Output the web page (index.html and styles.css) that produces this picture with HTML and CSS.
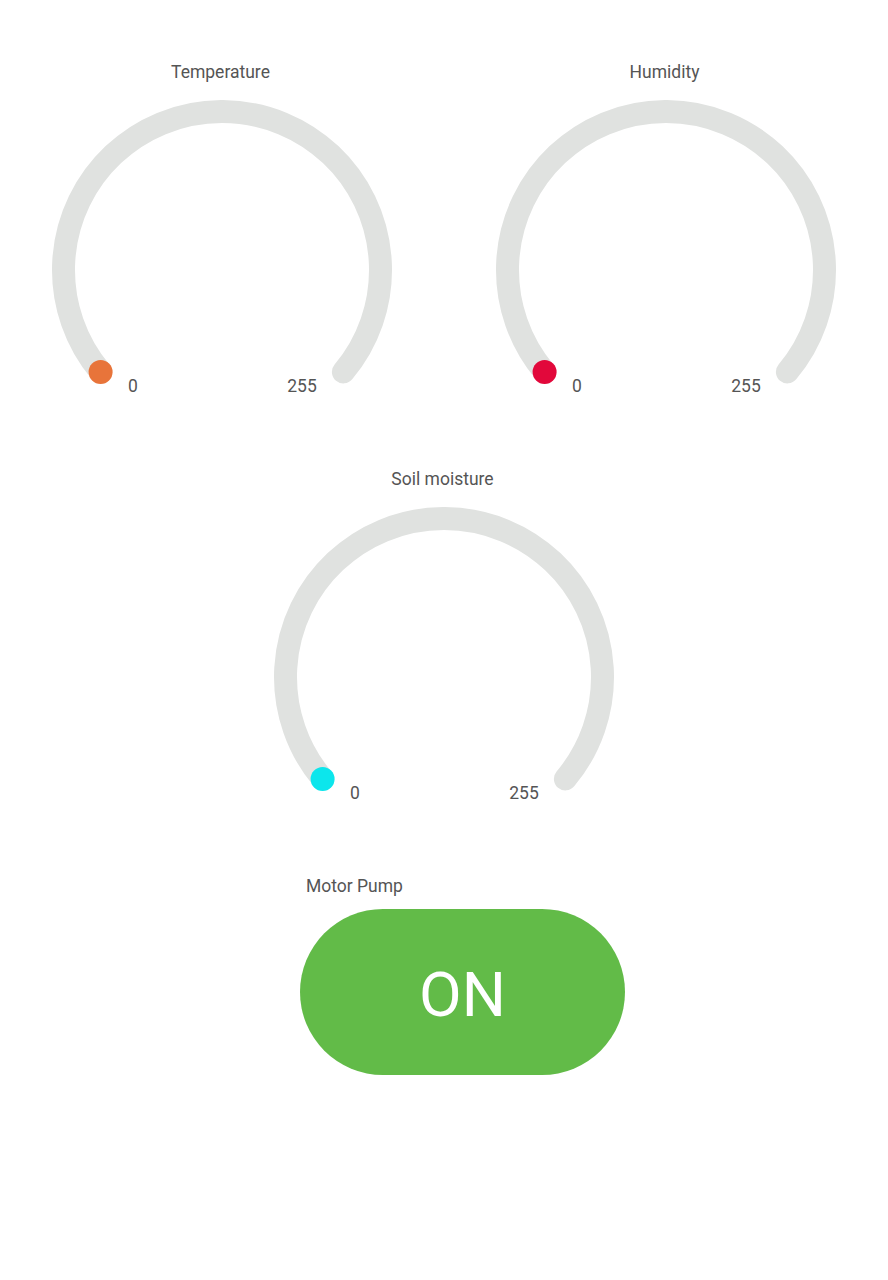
FILE: index.html
```html
<!DOCTYPE html>
<html>
<head>
<meta charset="utf-8">
<link rel="stylesheet" href="styles.css">
</head>
<body>
<main class="dash">
  <section class="grid">
    <div class="gauge">
      <div class="title">Temperature</div>
      <svg class="dial" width="360" height="310" viewBox="0 0 360 310">
        <path class="track" d="M 58.6 271.9 A 158.5 158.5 0 1 1 301.4 271.9"/>
        <circle cx="58.6" cy="271.9" r="12" fill="#E8743A"/>
        <text class="lbl" x="91" y="292">0</text>
        <text class="lbl" x="260" y="292">255</text>
      </svg>
    </div>
    <div class="gauge">
      <div class="title">Humidity</div>
      <svg class="dial" width="360" height="310" viewBox="0 0 360 310">
        <path class="track" d="M 58.6 271.9 A 158.5 158.5 0 1 1 301.4 271.9"/>
        <circle cx="58.6" cy="271.9" r="12" fill="#E2083B"/>
        <text class="lbl" x="91" y="292">0</text>
        <text class="lbl" x="260" y="292">255</text>
      </svg>
    </div>
    <div class="gauge wide">
      <div class="title">Soil moisture</div>
      <svg class="dial" width="360" height="310" viewBox="0 0 360 310">
        <path class="track" d="M 58.6 271.9 A 158.5 158.5 0 1 1 301.4 271.9"/>
        <circle cx="58.6" cy="271.9" r="12" fill="#0CE6EC"/>
        <text class="lbl" x="91" y="292">0</text>
        <text class="lbl" x="260" y="292">255</text>
      </svg>
    </div>
  </section>
  <section class="pump">
    <div class="pump-label">Motor Pump</div>
    <button class="pump-btn" type="button">ON</button>
  </section>
</main>
</body>
</html>
```
FILE: styles.css
```css
html, body {
  margin: 0;
  padding: 0;
  background: #ffffff;
}
body {
  font-family: Roboto, "Liberation Sans", Arial, sans-serif;
  color: #555555;
  width: 888px;
  height: 1280px;
  overflow: hidden;
}
.dash {
  padding-top: 60px;
}
.grid {
  display: grid;
  grid-template-columns: 444px 444px;
  row-gap: 57px;
}
.gauge {
  display: flex;
  flex-direction: column;
  align-items: center;
  gap: 16px;
}
.gauge.wide {
  grid-column: 1 / span 2;
}
.title {
  font-size: 17.5px;
  line-height: 24px;
  color: #555555;
  margin-right: 3px;
}
.dial {
  display: block;
}
.track {
  fill: none;
  stroke: #E0E2E0;
  stroke-width: 23;
  stroke-linecap: round;
}
.lbl {
  font-family: Roboto, "Liberation Sans", Arial, sans-serif;
  font-size: 17.5px;
  fill: #555555;
  text-anchor: middle;
}
.pump {
  margin-top: 57px;
  margin-left: 300px;
  width: 325px;
  display: flex;
  flex-direction: column;
  gap: 11px;
}
.pump-label {
  font-size: 17.5px;
  line-height: 24px;
  padding-left: 6px;
  color: #555555;
}
.pump-btn {
  width: 325px;
  height: 166px;
  border: none;
  border-radius: 83px;
  background: #62BB48;
  color: #ffffff;
  font-family: Roboto, "Liberation Sans", Arial, sans-serif;
  font-size: 62px;
  font-weight: 400;
  padding: 6px 0 0 0;
  line-height: 1;
}
```
